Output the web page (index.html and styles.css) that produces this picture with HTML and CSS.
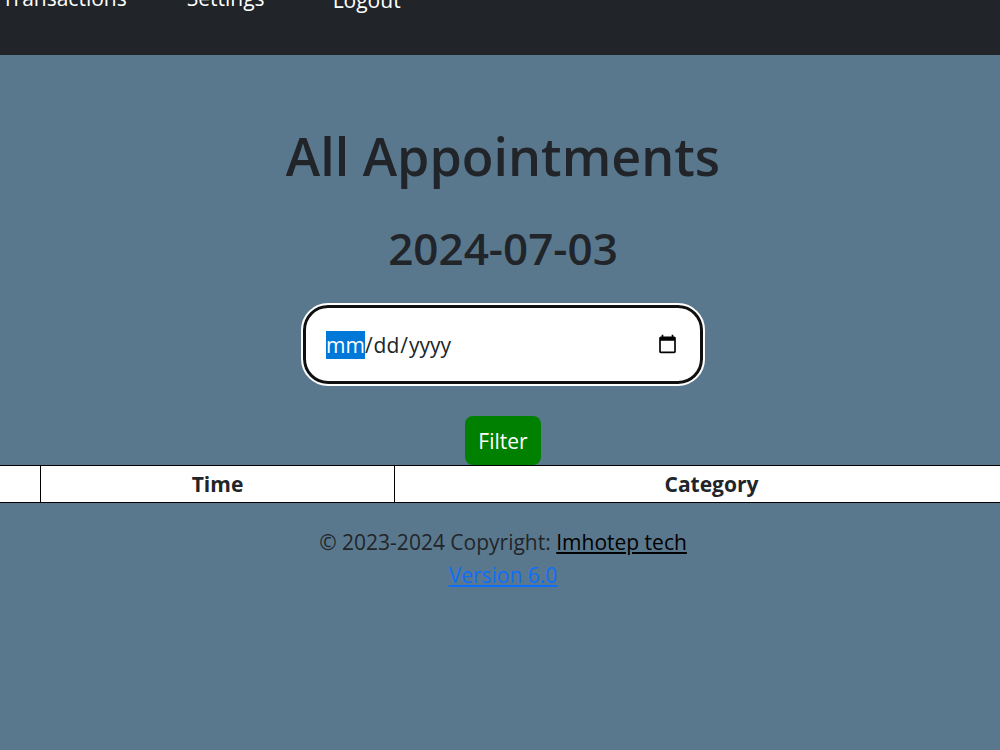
FILE: index.html
```html
<!DOCTYPE html>
<html lang="en">
<head>
    <meta charset="UTF-8">
    <meta name="viewport" content="width=device-width, initial-scale=1.0">
    <title>All Appointments</title>
    <link rel="stylesheet" href="styles.css">
</head>
<body>
    <nav class="navbar">
        <a class="nav-link" href="#transactions">Transactions</a>
        <a class="nav-link" href="#settings">Settings</a>
        <a class="nav-link nav-logout" href="#logout">Logout</a>
    </nav>

    <main>
        <h1 class="page-title">All Appointments</h1>
        <h2 class="page-date">2024-07-03</h2>

        <form class="filter-form">
            <input type="date" class="date-input" name="date" aria-label="Date">
            <button type="submit" class="btn">Filter</button>
        </form>

        <div class="table-wrapper">
            <table class="appointments">
                <thead>
                    <tr>
                        <th class="col-name"></th>
                        <th class="col-time">Time</th>
                        <th>Category</th>
                    </tr>
                </thead>
            </table>
        </div>
    </main>

    <footer class="footer">
        <div>© 2023-2024 Copyright: <a class="footer-link" href="#imhotep">Imhotep tech</a></div>
        <a class="version-link" href="#version">Version 6.0</a>
    </footer>
</body>
</html>
```

FILE: styles.css
```css
:root {
    --dark-color: #212529;
    --page-color: #5a788d;
    --link-color: #0d6efd;
    --highlight-color: #0078d7;
}

* {
    box-sizing: border-box;
    margin: 0;
    padding: 0;
}

body {
    font-family: 'Segoe UI', 'Open Sans', sans-serif;
    font-size: 21px;
    line-height: 33px;
    color: var(--dark-color);
    background-color: var(--page-color);
    overflow-x: hidden;
}

/* the bar is scrolled partly out of view */
.navbar {
    display: flex;
    align-items: flex-end;
    gap: 60px;
    margin-top: -18px;
    padding: 0 2px 38px;
    background-color: var(--dark-color);
}

.nav-link {
    padding-bottom: 2px;
    color: white;
    text-decoration: none;
}

.nav-logout {
    padding: 0 8px;
}

.page-title,
.page-date {
    padding-left: 6px;
    font-weight: 600;
    text-align: center;
}

.page-title {
    margin-top: 68px;
    font-size: 52px;
    line-height: 66px;
}

.page-date {
    margin-top: 33px;
    font-size: 44px;
    line-height: 52px;
}

.filter-form {
    display: flex;
    flex-direction: column;
    align-items: center;
    gap: 32px;
    margin-top: 31px;
    padding-left: 6px;
}

.date-input {
    width: 400px;
    max-width: 90%;
    height: 79px;
    padding: 0 20px;
    border: 3px solid #101010;
    border-radius: 25px;
    outline: 2px solid white;
    background-color: white;
    color: var(--dark-color);
    font-family: inherit;
    font-size: 21px;
}

.date-input::-webkit-datetime-edit-fields-wrapper,
.date-input::-webkit-datetime-edit-month-field {
    padding: 0;
}

.date-input::-webkit-datetime-edit-month-field {
    background-color: var(--highlight-color);
    color: white;
}

.btn {
    padding: 9px 13px 7px;
    border: none;
    border-radius: 8px;
    background-color: green;
    color: white;
    font-family: inherit;
    font-size: 21px;
    line-height: 33px;
    cursor: pointer;
}

.table-wrapper {
    overflow: hidden;
}

.appointments {
    width: calc(100% + 30px);
    margin-left: -1px;
    table-layout: fixed;
    border-collapse: collapse;
    background-color: white;
}

.appointments th {
    padding: 2px 2px 1px;
    border: 1px solid black;
    font-weight: 700;
    text-align: center;
}

.appointments .col-name {
    width: 41px;
}

.appointments .col-time {
    width: 354px;
}

.footer {
    padding: 23px 0 22px 6px;
    text-align: center;
}

.footer-link {
    color: black;
}

.version-link {
    color: var(--link-color);
}
```
